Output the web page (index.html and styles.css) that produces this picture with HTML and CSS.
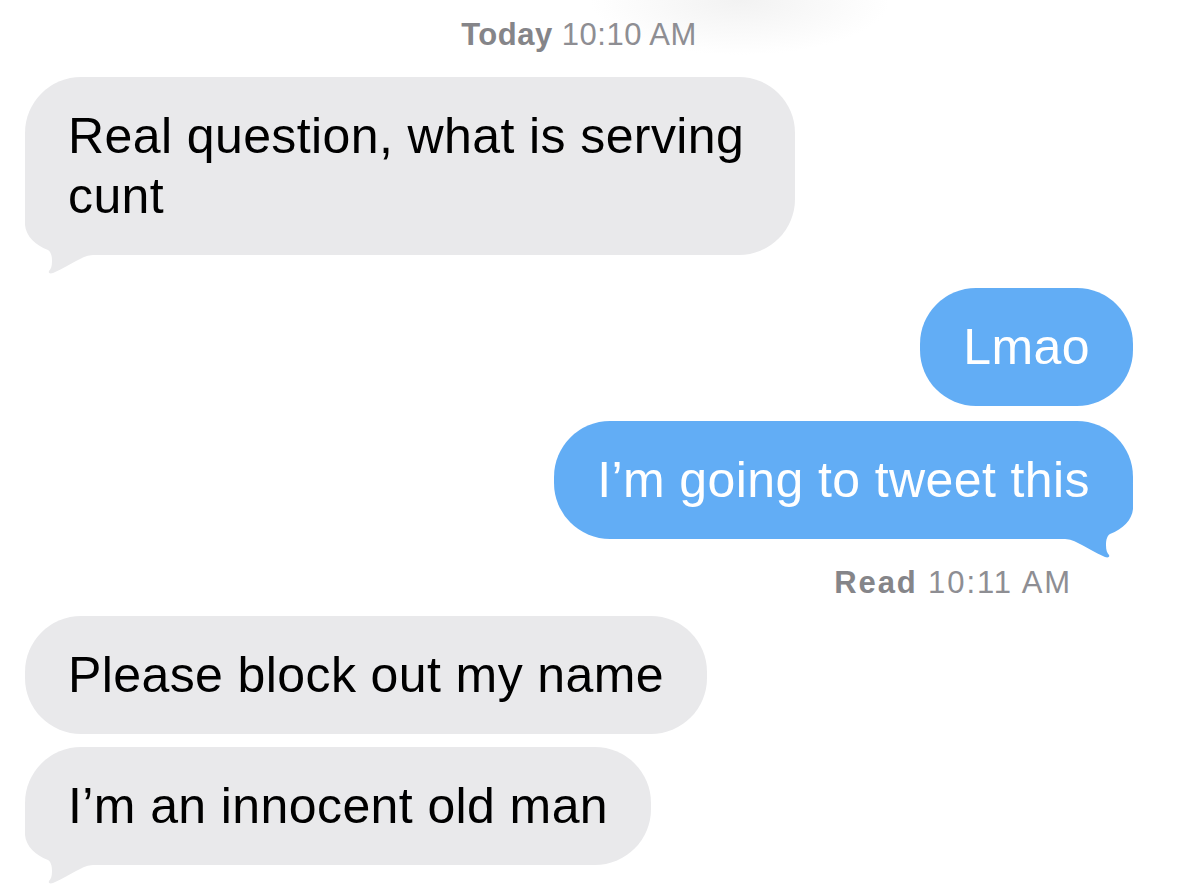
FILE: index.html
```html
<!DOCTYPE html>
<html lang="en">
<head>
<meta charset="utf-8">
<title>Messages</title>
<link rel="stylesheet" href="styles.css">
</head>
<body>
<div class="thread">
  <div class="stamp stamp-center"><b>Today</b> 10:10 AM</div>

  <div class="row row-in gap-top-1">
    <div class="bubble bubble-in bubble-wide">Real question, what is serving cunt<svg class="tail tail-left" width="70" height="76" viewBox="0 0 70 76"><path d="M0,0 L0,25 C1,36 10,45 23,50 C26,52 27,56 27,61 C27,66 26,69 24,71 C23,73 25,74 28,73 C38,69 48,62 57,58 C61,56 64,55 70,55 L70,0 Z"/></svg></div>
  </div>

  <div class="row row-out gap-top-2">
    <div class="bubble bubble-out">Lmao</div>
  </div>

  <div class="row row-out gap-top-3">
    <div class="bubble bubble-out">I’m going to tweet this<svg class="tail tail-right" width="70" height="76" viewBox="0 0 70 76"><path d="M0,0 L0,25 C1,36 10,45 23,50 C26,52 27,56 27,61 C27,66 26,69 24,71 C23,73 25,74 28,73 C38,69 48,62 57,58 C61,56 64,55 70,55 L70,0 Z"/></svg></div>
  </div>

  <div class="stamp stamp-read"><b>Read</b> 10:11 AM</div>

  <div class="row row-in gap-top-4">
    <div class="bubble bubble-in">Please block out my name</div>
  </div>

  <div class="row row-in gap-top-5">
    <div class="bubble bubble-in">I’m an innocent old man<svg class="tail tail-left" width="70" height="76" viewBox="0 0 70 76"><path d="M0,0 L0,25 C1,36 10,45 23,50 C26,52 27,56 27,61 C27,66 26,69 24,71 C23,73 25,74 28,73 C38,69 48,62 57,58 C61,56 64,55 70,55 L70,0 Z"/></svg></div>
  </div>
</div>
</body>
</html>
```

FILE: styles.css
```css
html, body {
  margin: 0;
  padding: 0;
}

body {
  width: 1182px;
  height: 893px;
  overflow: hidden;
  background:
    radial-gradient(ellipse 150px 55px at 740px 0px, #f2f2f2 0%, rgba(255,255,255,0) 100%),
    #ffffff;
  font-family: "Liberation Sans", Arial, sans-serif;
}

.thread {
  display: flex;
  flex-direction: column;
  padding: 0 49px 0 25px;
}

.stamp {
  font-size: 31px;
  line-height: 36px;
  color: #8e8e93;
  letter-spacing: 0.5px;
}

.stamp b {
  font-weight: 700;
  color: #858589;
}

.stamp-center {
  text-align: center;
  padding-top: 17px;
}

.stamp-read {
  text-align: right;
  padding-right: 61px;
  margin-top: 26px;
  letter-spacing: 1.9px;
}

.row {
  display: flex;
}

.row-in {
  justify-content: flex-start;
}

.row-out {
  justify-content: flex-end;
}

.gap-top-1 { margin-top: 24px; }
.gap-top-2 { margin-top: 33px; }
.gap-top-3 { margin-top: 15px; }
.gap-top-4 { margin-top: 15px; }
.gap-top-5 { margin-top: 13px; }

.bubble {
  position: relative;
  z-index: 0;
  box-sizing: border-box;
  max-width: 770px;
  padding: 29px 43px;
  border-radius: 56px;
  font-size: 50px;
  line-height: 60px;
  letter-spacing: 0.4px;
}

.bubble-wide {
  width: 770px;
}

.bubble-in {
  background: #e9e9eb;
  color: #000000;
}

.bubble-out {
  background: #62adf5;
  color: #ffffff;
}

.tail {
  position: absolute;
  z-index: -1;
  bottom: -21px;
}

.tail-left {
  left: 0;
}

.tail-right {
  right: 0;
  transform: scaleX(-1);
}

.bubble-in .tail path {
  fill: #e9e9eb;
}

.bubble-out .tail path {
  fill: #62adf5;
}
```
